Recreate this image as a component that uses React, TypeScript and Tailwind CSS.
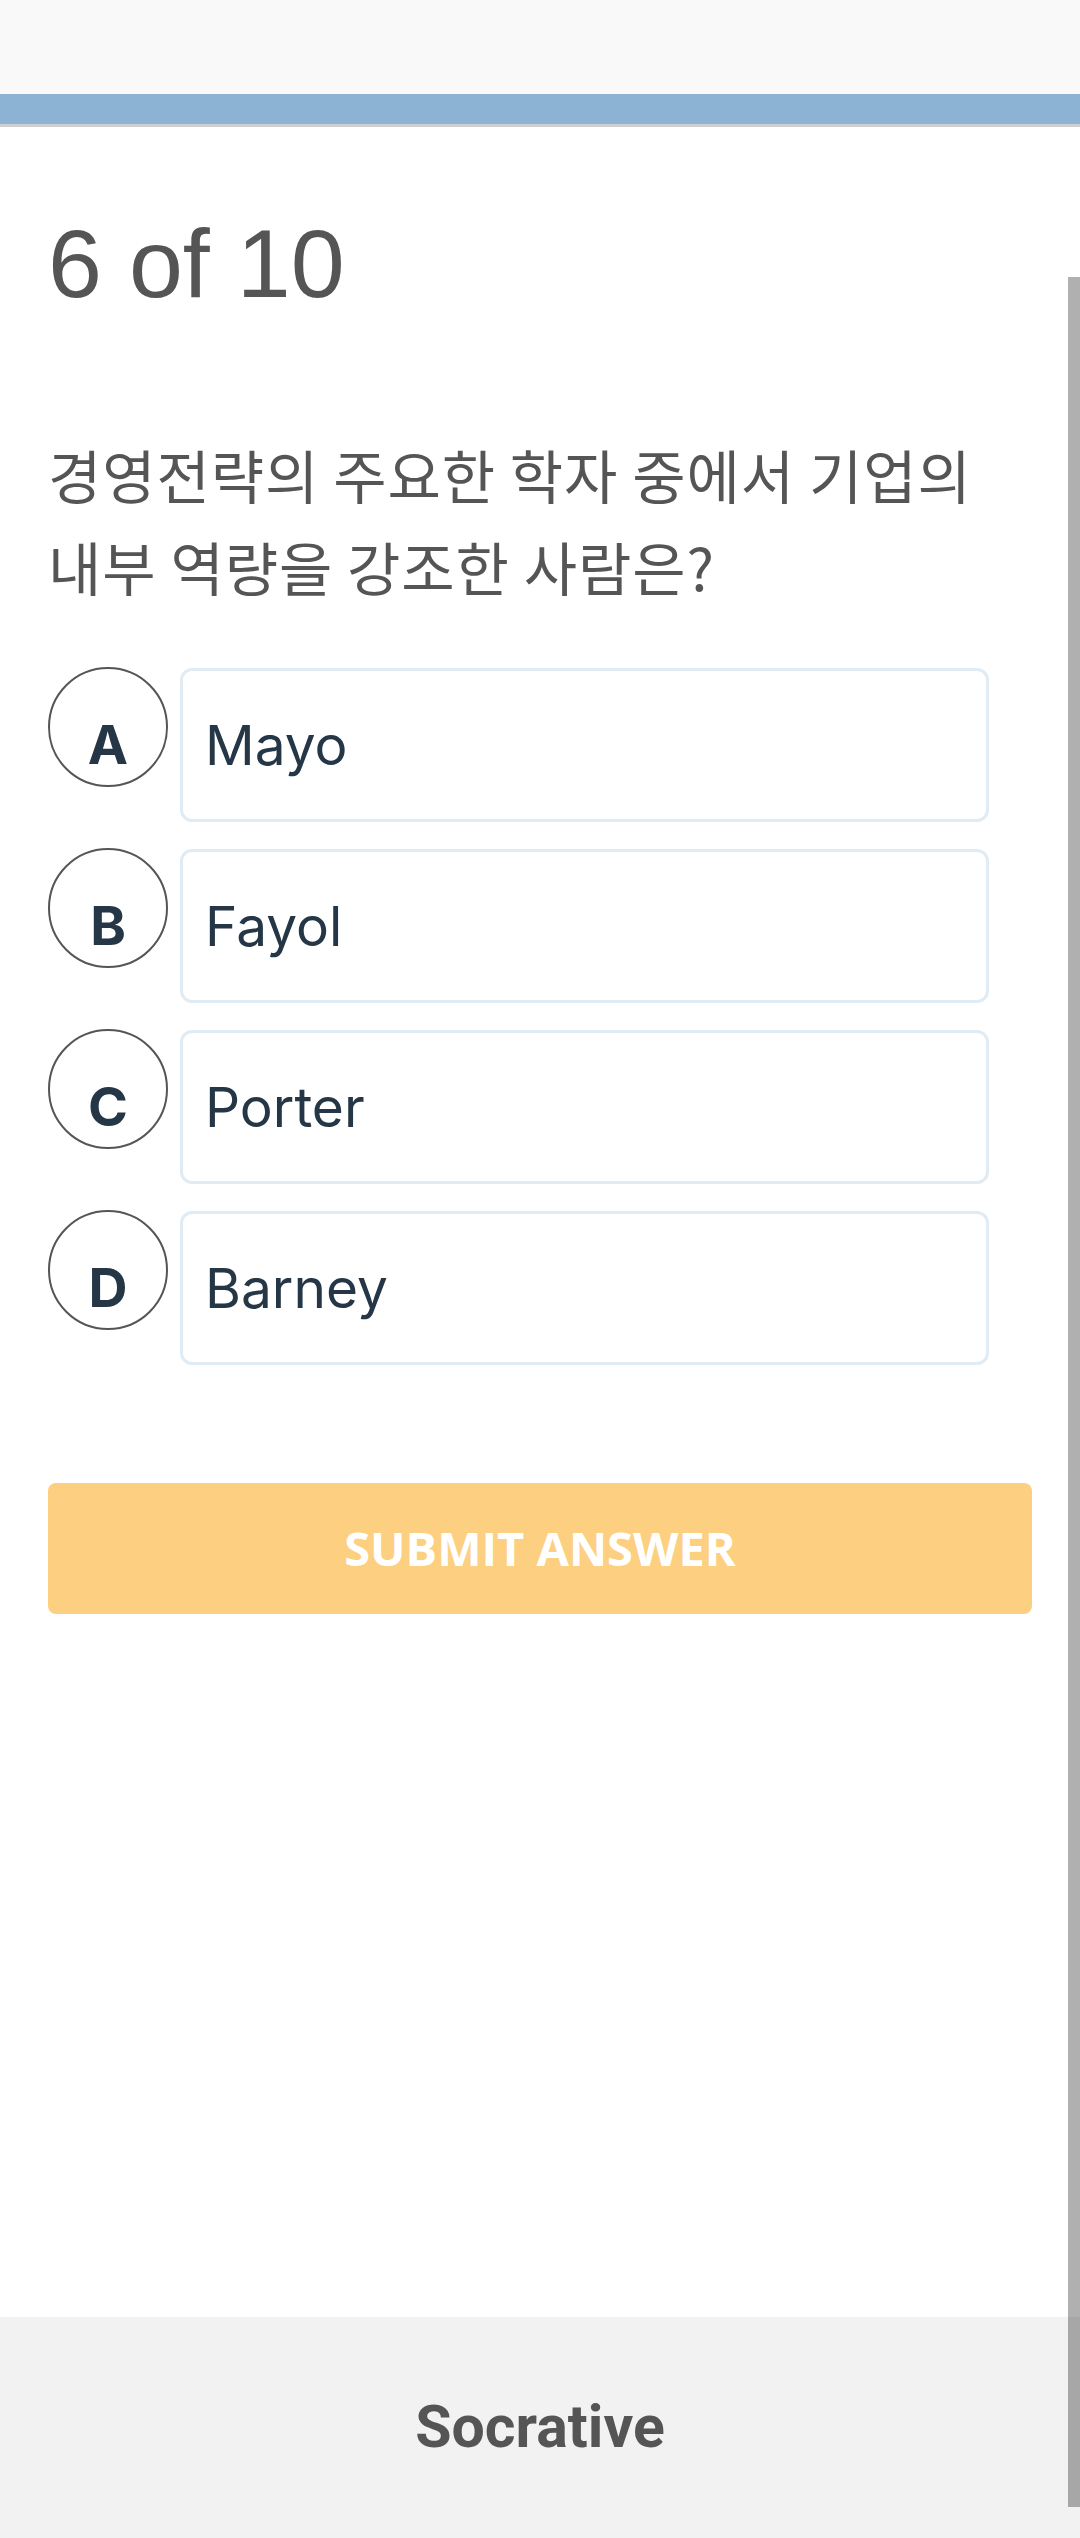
import React from "react";

const OPTIONS = [
  { key: "A", label: "Mayo" },
  { key: "B", label: "Fayol" },
  { key: "C", label: "Porter" },
  { key: "D", label: "Barney" },
];

function Choice({ letter, label }: { letter: string; label: string }) {
  return (
    <div className="flex items-start gap-[12px]">
      <div className="flex h-[120px] w-[120px] shrink-0 items-center justify-center rounded-full border-2 border-[#555555] pt-[36px]">
        <span className="font-['Inter',sans-serif] text-[54px] font-bold leading-none text-[#253746]">
          {letter}
        </span>
      </div>
      <div className="mt-[1px] flex h-[154px] w-[809px] items-center rounded-[12px] border-[3px] border-[#e1ebf4] bg-white px-[22px]">
        <span className="font-['Inter',sans-serif] text-[55px] leading-none text-[#253746]">
          {label}
        </span>
      </div>
    </div>
  );
}

export default function App() {
  return (
    <div className="relative flex min-h-[2538px] w-full flex-col bg-white">
      {/* top bar */}
      <div className="h-[94px] bg-[#f9f9f9]" />
      <div className="h-[30px] bg-[#8cb3d4]" />
      <div className="h-[3px] bg-[#cfcfcf]" />

      <main className="flex-1 px-[48px] pt-[89px]">
        <h1 className="font-['Liberation_Sans',Arial,sans-serif] text-[97px] leading-[96px] text-[#555555]">
          6 of 10
        </h1>

        <p className="mt-[116px] font-['Noto_Sans_CJK_KR',sans-serif] text-[58px] leading-[92px] tracking-[0.9px] text-[#555555]">
          경영전략의 주요한 학자 중에서 기업의
          <br />
          내부 역량을 강조한 사람은?
        </p>

        <div className="mt-[55px] flex flex-col gap-[26px]">
          {OPTIONS.map((o) => (
            <Choice key={o.key} letter={o.key} label={o.label} />
          ))}
        </div>

        <button
          type="button"
          className="mt-[118px] flex h-[131px] w-full items-center justify-center rounded-[8px] bg-[#fdcf81] font-['Open_Sans',sans-serif] text-[47px] font-bold text-white"
        >
          SUBMIT ANSWER
        </button>
      </main>

      <footer className="flex h-[221px] items-center justify-center bg-[#f2f2f2]">
        <span className="font-['Roboto',sans-serif] text-[59px] font-bold text-[#555555]">
          Socrative
        </span>
      </footer>

      {/* overlay scrollbar */}
      <div className="absolute right-0 top-[277px] h-[2230px] w-[12px] bg-[rgba(0,0,0,0.31)]" />
    </div>
  );
}
